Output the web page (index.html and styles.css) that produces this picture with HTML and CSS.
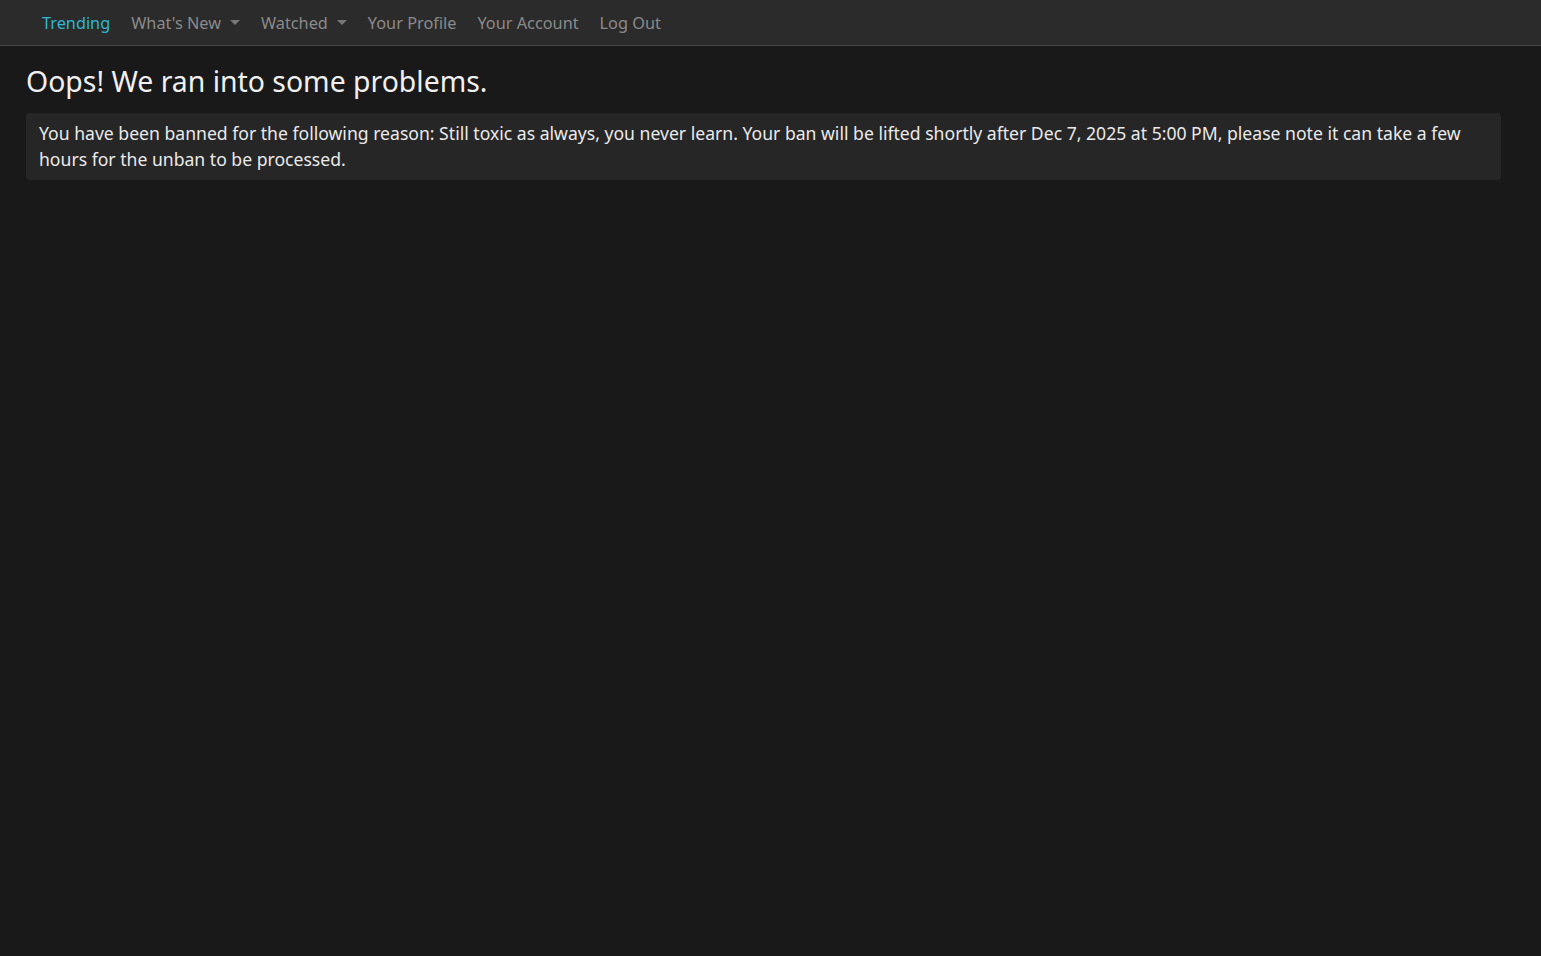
FILE: index.html
```html
<!DOCTYPE html>
<html lang="en">
<head>
  <meta charset="UTF-8">
  <title>Error</title>
  <link rel="stylesheet" href="styles.css">
</head>
<body>
  <div id="navbar">
    <ul class="nav">
      <li><a href="#" class="active">Trending</a></li>
      <li><a href="#">What's New <span class="caret"></span></a></li>
      <li><a href="#">Watched <span class="caret"></span></a></li>
      <li><a href="#">Your Profile</a></li>
      <li><a href="#">Your Account</a></li>
      <li><a href="#">Log Out</a></li>
    </ul>
  </div>
  <div id="content">
    <h1>Oops! We ran into some problems.</h1>
    <div class="block-message">
      You have been banned for the following reason: Still toxic as always, you never learn. Your ban will be lifted shortly after Dec 7, 2025 at 5:00 PM, please note it can take a few hours for the unban to be processed.
    </div>
  </div>
</body>
</html>
```

FILE: styles.css
```css
html, body{
  margin: 0;
  padding: 0;
  background: #191919;
  font-family: "Noto Sans", "Open Sans", sans-serif;
  color: #e6e6e6;
}
#navbar{
  height: 45px;
  background: #2b2b2b;
  border-bottom: 1px solid #484848;
}
.nav{
  list-style: none;
  margin: 0;
  padding: 0 0 0 42px;
  display: flex;
  gap: 21px;
}
.nav a{
  display: flex;
  align-items: center;
  height: 45px;
  font-size: 16.3px;
  color: #8a8a8a;
  text-decoration: none;
}
.nav a.active{
  color: #2eb6d3;
}
.caret{
  display: inline-block;
  width: 0;
  height: 0;
  margin-left: 9px;
  border-left: 5px solid transparent;
  border-right: 5px solid transparent;
  border-top: 5px solid #777;
}
#content{
  padding: 0 40px 0 26px;
}
h1{
  margin: 0;
  padding: 17px 0 14px;
  font-size: 28.4px;
  font-weight: 400;
  line-height: 36px;
  color: #f0f0f0;
}
.block-message{
  background: #262626;
  border-radius: 4px;
  padding: 7px 13px 8px;
  font-size: 17.6px;
  line-height: 26px;
  color: #eaeaea;
}
```
